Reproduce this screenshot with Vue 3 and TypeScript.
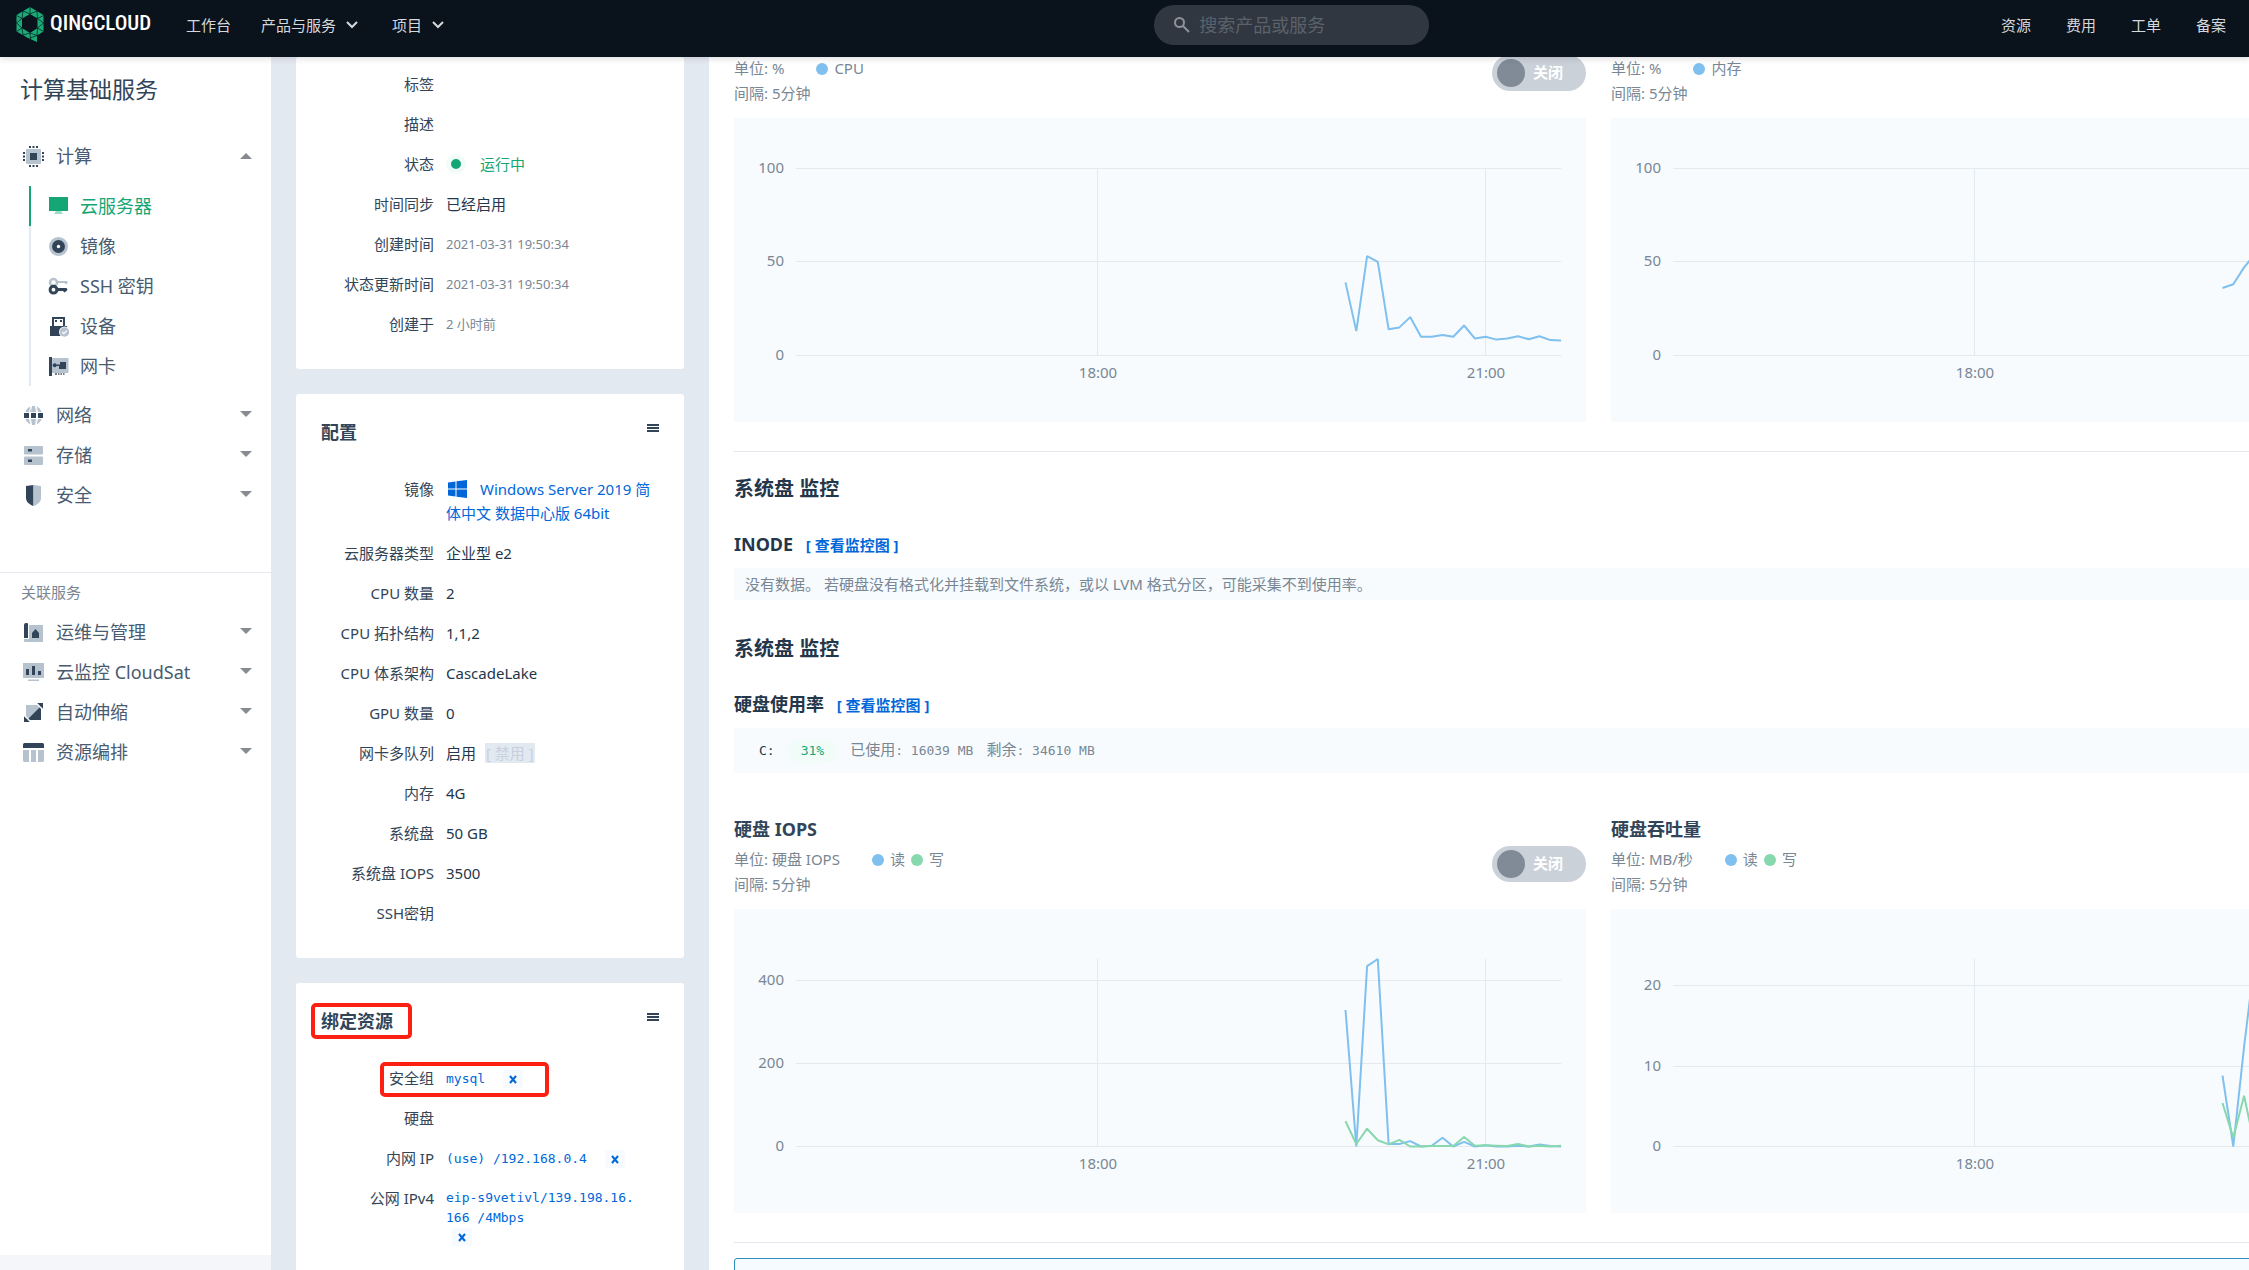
<script setup lang="ts">
interface NavItem { label: string; icon: string; active?: boolean }
interface Series { color: string; values: number[] }
interface Chart {
  title?: string
  unit: string
  legend: { name: string; color: string }[]
  max: number
  yTicks: number[]
  xTicks: { label: string; x: number }[]
  series: Series[]
  toggle: boolean
}

const BLUE = '#7fc0ee'
const GREEN = '#87d8ac'

const D = '#324558'
const L = '#b6c2ce'

const icons: Record<string, string> = {
  cpu: `<path fill="${D}" d="M6 0h2v2H6zM9.500 0h2v2h-2zM13 0h2v2h-2zM6 19h2v2H6zM9.500 19h2v2h-2zM13 19h2v2h-2zM0 6h2v2H0zM0 9.500h2v2H0zM0 13h2v2H0zM19 6h2v2h-2zM19 9.500h2v2h-2zM19 13h2v2h-2z"/><path fill="${L}" d="M4 3h13a1 1 0 0 1 1 1v13a1 1 0 0 1-1 1H4a1 1 0 0 1-1-1V4a1 1 0 0 1 1-1z"/><path fill="${D}" d="M7 7h7v7H7z"/>`,
  server: `<path fill="#15a675" d="M1 1h19v14H1z"/><path fill="#a1dcc8" d="M8 15h5l2 3H6z"/>`,
  disc: `<circle cx="10.500" cy="10.500" r="9.500" fill="${L}"/><circle cx="10.500" cy="10.500" r="6.500" fill="${D}"/><circle cx="10.500" cy="10.500" r="1.700" fill="#fff"/>`,
  key: `<circle cx="5.500" cy="6.500" r="3.500" fill="none" stroke="${L}" stroke-width="2.400"/><path fill="${L}" d="M9 5h10.500v2L18 8.500 16.500 7H9z"/><circle cx="5.500" cy="13.700" r="3.400" fill="#fff" stroke="${D}" stroke-width="3"/><path fill="${D}" d="M9 12h9.500l1 1.500-1 1.500-2 1.500-1.500-1.500H9z"/>`,
  usb: `<path fill="${D}" d="M4 1h13v9h2v10H2V10h2z"/><path fill="#fff" d="M6 3h9v7H6z"/><path fill="${D}" d="M7 4h2v2H7zM12 4h2v2h-2z"/><circle cx="16.500" cy="16" r="5.500" fill="#fff"/><circle cx="16.500" cy="16" r="4.700" fill="${L}"/><path fill="none" stroke="#fff" stroke-width="1.300" d="M14.300 16l1.600 1.600 2.900-3"/>`,
  nic: `<path fill="${D}" d="M1 1h3v19H1z"/><path fill="${L}" d="M4 2h15.500a1 1 0 0 1 1 1v13a1 1 0 0 1-1 1H4z"/><path fill="${D}" d="M12 6h6v7h-7v-3H8.500a2 2 0 1 1 0-1.500H12z"/><path fill="${D}" opacity=".7" d="M7 17h2v2H7zM10 17h1.500v2H10zM12.500 17H14v2h-1.500zM15 17h1.500v2H15z"/>`,
  globe: `<path fill="${L}" d="M8 1.300V7H2.500C3.500 4.200 5.500 2.100 8 1.300zM9 1h3l1 6H8zM13 1.300c2.500.8 4.500 2.900 5.500 5.700H14zM2.500 14H7l1 5.700C5.500 18.900 3.500 16.800 2.500 14zM8 14h5l-1 6H9zM14 14h4.500c-1 2.800-3 4.900-5.500 5.700z"/><path stroke="#fff" stroke-width="1" d="M7.800 1L6.500 7M13.200 1l1.300 6M7.800 20l-1.300-6M13.200 20l1.300-6"/><path fill="${D}" d="M1 8h5v5H1zM8 8h5v5H8zM15 8h5v5h-5z"/>`,
  storage: `<rect x="1" y="1" width="19" height="8.500" rx="1" fill="${L}"/><rect x="1" y="11.500" width="19" height="8.500" rx="1" fill="${L}"/><path fill="${D}" d="M5 4h4v2.500H5zM5 14.500h4V17H5z"/>`,
  shield: `<path fill="${D}" d="M10.500 0L3 1v12c0 4 3.500 6.500 7.500 8z"/><path fill="${L}" d="M10.500 0L18 1v12c0 4-3.500 6.500-7.500 8z"/>`,
  ops: `<path fill="${L}" d="M6 3h14v17H2a1 1 0 0 1-1-1v-2h5z"/><path fill="${D}" d="M3 1h1a1 1 0 0 1 1 1v14H1V3a2 2 0 0 1 2-2zM9 16v-5l3.500-4 3.500 4v5z"/>`,
  stats: `<path fill="${L}" d="M0 1h21v15H0zM5 17.500h11V19H5z"/><path fill="${D}" d="M3 7h3v6H3zM9 4h3v9H9zM15 9h3v4h-3z"/>`,
  scale: `<path fill="${L}" d="M3 3h15v15H3z"/><path fill="${D}" d="M18 4v14H4zM14 1h6v6l-2-2zM1 14l6 6H1z"/><path stroke="#fff" stroke-width="1.200" d="M13 1l7 7M1 13l7 7"/>`,
  stack: `<path fill="${D}" d="M1.500 1h18A1.500 1.500 0 0 1 21 2.500V6H0V2.500A1.500 1.500 0 0 1 1.500 1z"/><path fill="${L}" d="M0 8h6v12H1.500A1.500 1.500 0 0 1 0 18.500zM8 8h5v12H8zM15 8h6v10.500a1.500 1.500 0 0 1-1.500 1.500H15z"/>`,
}

const computeItems: NavItem[] = [
  { label: '云服务器', icon: 'server', active: true },
  { label: '镜像', icon: 'disc' },
  { label: 'SSH 密钥', icon: 'key' },
  { label: '设备', icon: 'usb' },
  { label: '网卡', icon: 'nic' },
]
const groups: NavItem[] = [
  { label: '网络', icon: 'globe' },
  { label: '存储', icon: 'storage' },
  { label: '安全', icon: 'shield' },
]
const related: NavItem[] = [
  { label: '运维与管理', icon: 'ops' },
  { label: '云监控 CloudSat', icon: 'stats' },
  { label: '自动伸缩', icon: 'scale' },
  { label: '资源编排', icon: 'stack' },
]

const config = [
  { label: '云服务器类型', value: '企业型 e2' },
  { label: 'CPU 数量', value: '2' },
  { label: 'CPU 拓扑结构', value: '1,1,2' },
  { label: 'CPU 体系架构', value: 'CascadeLake' },
  { label: 'GPU 数量', value: '0' },
  { label: '网卡多队列', value: '启用', action: '[ 禁用 ]' },
  { label: '内存', value: '4G' },
  { label: '系统盘', value: '50 GB' },
  { label: '系统盘 IOPS', value: '3500' },
  { label: 'SSH密钥', value: '' },
]

const bound = [
  { label: '安全组', lines: ['mysql'] },
  { label: '硬盘', lines: [] as string[] },
  { label: '内网 IP', lines: ['(use) /192.168.0.4'] },
  { label: '公网 IPv4', lines: ['eip-s9vetivl/139.198.16.', '166 /4Mbps'] },
]

const t18 = { label: '18:00', x: 364 }
const t21 = { label: '21:00', x: 752 }
const rw = [{ name: '读', color: BLUE }, { name: '写', color: GREEN }]

const usage: Chart[] = [
  {
    unit: '%', legend: [{ name: 'CPU', color: BLUE }], max: 100, yTicks: [100, 50, 0], xTicks: [t18, t21], toggle: true,
    series: [{ color: BLUE, values: [39, 13, 53, 50, 14, 15, 20.5, 10, 10, 11, 10, 16, 9, 10, 8.5, 9, 10.3, 8.7, 10.3, 8.2, 8] }],
  },
  {
    unit: '%', legend: [{ name: '内存', color: BLUE }], max: 100, yTicks: [100, 50, 0], xTicks: [t18], toggle: false,
    series: [{ color: BLUE, values: [36, 38, 47, 54] }],
  },
]
const disk: Chart[] = [
  {
    title: '硬盘 IOPS', unit: '硬盘 IOPS', legend: rw, max: 452, yTicks: [400, 200, 0], xTicks: [t18, t21], toggle: true,
    series: [
      { color: BLUE, values: [329, 0, 435, 452, 6, 6, 13, 0, 2, 21, 0, 11, 0, 3, 0, 0, 2, 0, 5, 1, 0] },
      { color: GREEN, values: [61, 6, 43, 15, 5, 16, 0, 0, 1, 1, 1, 23, 2, 3, 2, 1, 6, 0, 2, 0, 2] },
    ],
  },
  {
    title: '硬盘吞吐量', unit: 'MB/秒', legend: rw, max: 23.3, yTicks: [20, 10, 0], xTicks: [t18], toggle: false,
    series: [
      { color: BLUE, values: [8.8, 0, 12.4, 23.3] },
      { color: GREEN, values: [5.4, 1.1, 6.3, 0] },
    ],
  },
]
const chartRows = { usage, disk }

const BASE = 237.5
const PLOT = 187.5
const yOf = (v: number, max: number) => BASE - (v / max) * PLOT
const lineY = (v: number, max: number) => Math.floor(yOf(v, max)) + 0.5
const points = (s: Series, max: number) =>
  s.values.map((v, i) => `${(611.5 + i * 10.78).toFixed(1)},${yOf(v, max).toFixed(1)}`).join(' ')
</script>

<template>
  <div class="app">
    <header class="topbar">
      <a class="logo" href="#">
        <svg width="28" height="36" viewBox="0 0 28 36" aria-hidden="true">
          <path fill="#1aab77" fill-rule="evenodd" d="M14 0l13.500 8v16.500L21 28.500V35l-9-4L.500 24.500V8zM14 7L6 11.500v9.500l8 5 7.500-5v-9.500z" />
          <path fill="none" stroke="#0a121b" stroke-width=".7" d="M7 4l-1 7.500-5.500-3M14 0v7L7 4M14 7l7-3 .5 7.500 6-3M6 11.500L.500 16 6 21l-5.500 3.500M21.500 11.500L27.500 16l-6 5 6 3.500M6 21l1 7 7-2 .5 6.500M21.500 21l-.5 7.500-7-2.500M14 31l7-2.500" />
        </svg>
        <span class="brand">QINGCLOUD</span>
      </a>
      <nav class="nav">
        <a href="#">工作台</a>
        <a href="#">产品与服务<svg width="12" height="8" viewBox="0 0 12 8"><path d="M1 1l5 5 5-5" /></svg></a>
        <a href="#">项目<svg width="12" height="8" viewBox="0 0 12 8"><path d="M1 1l5 5 5-5" /></svg></a>
      </nav>
      <label class="search">
        <svg width="16" height="16" viewBox="0 0 16 16"><circle cx="5.500" cy="5.500" r="4.500" /><path d="M9 9l6 6" /></svg>
        <input type="text" placeholder="搜索产品或服务" aria-label="搜索产品或服务" />
      </label>
      <nav class="nav nav-right">
        <a href="#">资源</a><a href="#">费用</a><a href="#">工单</a><a href="#">备案</a>
      </nav>
    </header>

    <div class="body">
      <aside class="sidebar">
        <div class="side-main">
          <h1>计算基础服务</h1>
          <button class="row" type="button">
            <svg width="21" height="21" viewBox="0 0 21 21" v-html="icons.cpu" />
            <span>计算</span><i class="caret up" />
          </button>
          <ul class="sub">
            <li v-for="n in computeItems" :key="n.label" :class="{ active: n.active }">
              <a href="#"><svg width="21" height="21" viewBox="0 0 21 21" v-html="icons[n.icon]" />{{ n.label }}</a>
            </li>
          </ul>
          <button v-for="n in groups" :key="n.label" class="row" type="button">
            <svg width="21" height="21" viewBox="0 0 21 21" v-html="icons[n.icon]" />
            <span>{{ n.label }}</span><i class="caret" />
          </button>
          <div class="related">
            <h2>关联服务</h2>
            <button v-for="n in related" :key="n.label" class="row" type="button">
              <svg width="21" height="21" viewBox="0 0 21 21" v-html="icons[n.icon]" />
              <span>{{ n.label }}</span><i class="caret" />
            </button>
          </div>
        </div>
        <div class="side-foot" />
      </aside>

      <section class="details">
        <article class="card card-basic">
          <dl>
            <div><dt>标签</dt><dd /></div>
            <div><dt>描述</dt><dd /></div>
            <div><dt>状态</dt><dd class="running"><i class="status" />运行中</dd></div>
            <div><dt>时间同步</dt><dd>已经启用</dd></div>
            <div><dt>创建时间</dt><dd class="muted">2021-03-31 19:50:34</dd></div>
            <div><dt>状态更新时间</dt><dd class="muted">2021-03-31 19:50:34</dd></div>
            <div><dt>创建于</dt><dd class="muted">2 小时前</dd></div>
          </dl>
        </article>

        <article class="card">
          <header class="card-head">
            <h2>配置</h2>
            <button class="menu" type="button" aria-label="菜单"><i /><i /><i /></button>
          </header>
          <dl>
            <div>
              <dt>镜像</dt>
              <dd>
                <a href="#"><svg class="win" width="19" height="18" viewBox="0 0 19 18"><path d="M0 2.500L7.500 1.400V8.500H0zM8.500 1.200L19 0v8.500H8.500zM0 9.500h7.500v7.100L0 15.500zM8.500 9.500H19V18L8.500 16.800z" /></svg>Windows Server 2019 简体中文 数据中心版 64bit</a>
              </dd>
            </div>
            <div v-for="c in config" :key="c.label">
              <dt>{{ c.label }}</dt>
              <dd>{{ c.value }}<button v-if="c.action" class="disabled" type="button" disabled>{{ c.action }}</button></dd>
            </div>
          </dl>
        </article>

        <article class="card">
          <header class="card-head">
            <h2>绑定资源</h2>
            <button class="menu" type="button" aria-label="菜单"><i /><i /><i /></button>
          </header>
          <dl>
            <div v-for="b in bound" :key="b.label">
              <dt>{{ b.label }}</dt>
              <dd class="bound">
                <template v-if="b.lines.length">
                  <a href="#"><span v-for="l in b.lines" :key="l">{{ l }}</span></a>
                  <button class="unbind" type="button" aria-label="解绑"><svg width="8" height="9" viewBox="0 0 8 9"><path d="M1 1l6 7M7 1L1 8" /></svg></button>
                </template>
              </dd>
            </div>
          </dl>
          <div class="mark mark-title" />
          <div class="mark mark-group" />
        </article>
      </section>

      <main class="monitor">
        <template v-for="(row, key) in chartRows" :key="key">
          <template v-if="key === 'disk'">
            <hr />
            <h2>系统盘 监控</h2>
            <h3>INODE <a href="#">[ 查看监控图 ]</a></h3>
            <p class="notice">没有数据。 若硬盘没有格式化并挂载到文件系统，或以 LVM 格式分区，可能采集不到使用率。</p>
            <h2 class="second">系统盘 监控</h2>
            <h3>硬盘使用率 <a href="#">[ 查看监控图 ]</a></h3>
            <div class="volume">
              <b>C:</b><span class="pill">31%</span>
              <span><em>已使用</em>: 16039 MB</span><span><em>剩余</em>: 34610 MB</span>
            </div>
          </template>
          <div class="charts" :class="`charts-${key}`">
            <figure v-for="(c, i) in row" :key="i">
              <h3 v-if="c.title">{{ c.title }}</h3>
              <div class="meta">
                <div>
                  <div class="unit">
                    <span class="unit-name">单位: {{ c.unit }}</span>
                    <span v-for="g in c.legend" :key="g.name" class="legend"><i :style="{ background: g.color }" />{{ g.name }}</span>
                  </div>
                  <div>间隔: 5分钟</div>
                </div>
                <label v-if="c.toggle" class="switch"><input type="checkbox" /><i /><span>关闭</span></label>
              </div>
              <svg class="plot" width="852" height="304" viewBox="0 0 852 304">
                <g class="grid">
                  <line v-for="y in c.yTicks" :key="y" x1="62" x2="827" :y1="lineY(y, c.max)" :y2="lineY(y, c.max)" />
                  <line v-for="t in c.xTicks" :key="t.label" :x1="t.x - 0.5" :x2="t.x - 0.5" y1="50" y2="237" />
                </g>
                <text v-for="y in c.yTicks" :key="y" x="50" :y="lineY(y, c.max) + 4" text-anchor="end">{{ y }}</text>
                <text v-for="t in c.xTicks" :key="t.label" :x="t.x" y="260" text-anchor="middle">{{ t.label }}</text>
                <polyline v-for="(s, k) in c.series" :key="k" :points="points(s, c.max)" :stroke="s.color" />
              </svg>
            </figure>
          </div>
        </template>
        <hr />
        <div class="alert" />
      </main>
    </div>
  </div>
</template>

<style>
body {
  background: #e3e9f1;
}
</style>

<style scoped>
.app {
  height: 100vh;
  overflow: hidden;
  display: flex;
  flex-direction: column;
  font-family: "Noto Sans", "Noto Sans CJK SC", sans-serif;
  font-size: 15px;
  line-height: 24px;
  color: #24364a;
}
* { box-sizing: border-box; }
h1, h2, h3, p, ul, dl, dd, figure { margin: 0; padding: 0; }
a { color: #0067d9; text-decoration: none; }
button { font: inherit; border: 0; background: none; padding: 0; color: inherit; }

.topbar {
  position: relative;
  z-index: 2;
  flex: none;
  height: 57px;
  padding: 5px 23px 7px 16px;
  display: grid;
  grid-template-columns: 10fr 275px 7fr;
  grid-template-areas: "left search right";
  align-items: start;
  background: #0a121b;
  box-shadow: 0 2px 6px rgba(36, 30, 50, 0.14);
}
.logo {
  grid-area: left;
  position: relative;
  z-index: 1;
  display: flex;
  gap: 6px;
  padding-top: 2px;
  width: max-content;
}
.brand {
  color: #fff;
  font: 500 21px/32px "Roboto Condensed", "Liberation Sans Narrow", Roboto, sans-serif;
}
.nav {
  grid-area: left;
  display: flex;
  gap: 30px;
  padding-left: 170px;
  line-height: 40px;
  width: max-content;
}
.nav a { color: #d5d8db; }
.nav svg { margin: 0 4px 0 10px; vertical-align: 2px; fill: none; stroke: #d5d8db; stroke-width: 2; }
.nav-right { grid-area: right; justify-self: end; gap: 35px; padding: 0; }
.search {
  grid-area: search;
  display: flex;
  align-items: center;
  gap: 9px;
  height: 40px;
  padding: 0 20px 1px;
  border-radius: 20px;
  background: #303740;
}
.search svg { flex: none; fill: none; stroke: #8d9399; stroke-width: 2; }
.search input {
  flex: 1;
  min-width: 0;
  border: 0;
  padding: 0;
  outline: 0;
  background: none;
  color: #fff;
  font: inherit;
  font-size: 18px;
}
.search input::placeholder { color: #5b626b; opacity: 1; }

.body { flex: 1; min-height: 0; display: flex; }

.sidebar { flex: none; width: 271px; display: flex; flex-direction: column; background: #fff; }
.side-main { flex: 1; padding-top: 15px; }
.side-foot { height: 15px; background: #f4f6fa; }
.sidebar h1 { margin: 0 20px 30px; font-size: 23px; line-height: 34px; font-weight: 400; color: #324558; }
.row {
  display: flex;
  align-items: center;
  width: 100%;
  height: 40px;
  padding: 0 19px 0 23px;
  gap: 12px;
  font-size: 18px;
  color: #485b70;
  text-align: left;
}
.row span { flex: 1; }
.caret { margin-bottom: 3px; border: 6px solid transparent; border-top-color: #858b91; border-bottom: 0; }
.caret.up { margin-bottom: 0; border-top: 0; border-bottom: 6px solid #858b91; }
.sub { margin: 10px 0 9px 29px; list-style: none; }
.sub li { height: 40px; border-left: 2px solid #e3e9f1; }
.sub a { display: flex; align-items: center; gap: 11px; height: 40px; padding-left: 17px; font-size: 18px; color: #485b70; }
.sub .active { border-color: #15a675; }
.sub .active a { color: #15a675; }
.related { margin-top: 57px; padding-top: 9px; border-top: 1px solid #e3e9ef; }
.related h2 { margin: 0 21px 10px; font-size: 15px; line-height: 20px; font-weight: 400; color: #798794; }

.details { flex: none; width: 438px; padding: 0 25px; display: flex; flex-direction: column; gap: 25px; }
.card { position: relative; flex: none; padding: 24px 25px 25px 0; border-radius: 3px; background: #fff; }
.card-basic { padding-top: 7px; }
.card-head { display: flex; justify-content: space-between; align-items: flex-start; padding-left: 25px; margin-bottom: 23px; }
.card-head h2 { font-size: 18px; line-height: 28px; color: #324558; }
.menu { display: flex; flex-direction: column; justify-content: center; gap: 1px; width: 12px; height: 20px; }
.menu i { height: 2px; background: #324558; }
dl > div { display: flex; gap: 12px; padding: 8px 0; min-height: 40px; }
dt { flex: none; width: 138px; text-align: right; color: #324558; }
dd { flex: 1; min-width: 0; }
.muted { font-size: 13px; color: #798794; }
.running { display: flex; align-items: center; gap: 14px; color: #15a675; }
.status { width: 20px; height: 20px; border: 5px solid #f1fcf9; border-radius: 50%; background: #15a675; }
.win { margin: 0 13px 0 2px; vertical-align: -3px; fill: #0067d9; }
.disabled { margin-left: 9px; line-height: 20px; padding: 0 1px; background: #e3e9f1; color: #c5d1de; }
.bound { display: flex; flex-wrap: wrap; align-items: center; gap: 0 12px; padding-top: 2px; font: 13px/20px "DejaVu Sans Mono", monospace; }
.bound span { display: block; white-space: nowrap; }
.unbind { display: flex; align-items: center; justify-content: center; width: 20px; height: 18px; margin-left: 6px; border-radius: 2px; background: #f7fafe; }
.unbind svg { fill: none; stroke: #0067d9; stroke-width: 2; }
.mark { position: absolute; border: 4px solid #fb2011; border-radius: 5px; }
.mark-title { left: 15px; top: 20px; width: 101px; height: 36px; }
.mark-group { left: 84px; top: 79px; width: 169px; height: 35px; }

.monitor { flex: 1; min-width: 0; margin-top: -1px; padding-left: 25px; overflow: hidden; background: #fff; }
.monitor hr { height: 1px; margin: 29px 0 0; border: 0; background: #e3e8ee; }
.monitor h2 { margin-top: 22px; font-size: 20px; line-height: 30px; }
.monitor h2.second { margin-top: 34px; }
.monitor h3 { font-size: 18px; line-height: 28px; }
.monitor > h3 { margin: 26px 0 9px; }
.monitor h3 a { margin-left: 8px; font-size: 15px; }
.notice { height: 32px; padding-left: 11px; line-height: 32px; background: #f7fbfe; color: #798794; }
.volume {
  display: flex;
  align-items: center;
  height: 45px;
  padding-left: 25px;
  gap: 13px;
  background: #f7fbfe;
  color: #798794;
  font-family: "DejaVu Sans Mono", "Noto Sans CJK SC", monospace;
  font-size: 13px;
}
.volume b { font-weight: 400; color: #24364a; }
.volume em { font-size: 15px; font-style: normal; }
.pill { padding: 0 13px; border-radius: 12px; background: #f1fcf9; color: #15a675; }
.charts { display: grid; grid-template-columns: 852px 1fr; gap: 25px; }
.charts-disk { margin-top: 42px; }
.charts figure { min-width: 0; overflow: hidden; }
.charts h3 { margin-bottom: 4px; color: #324558; }
.meta { display: flex; justify-content: space-between; align-items: flex-start; height: 62px; line-height: 25px; color: #798794; }
.unit { display: flex; gap: 6px; }
.unit-name { margin-right: 26px; }
.legend { display: flex; align-items: center; gap: 6px; }
.legend i { width: 12px; height: 12px; border-radius: 50%; }
.switch { display: flex; align-items: center; gap: 8px; width: 94px; height: 36px; margin-top: -1px; padding: 0 0 1px 5px; border-radius: 18px; background: #cad1d8; color: #fff; font-weight: 700; }
.switch input { position: absolute; opacity: 0; }
.switch i { width: 28px; height: 28px; border-radius: 50%; background: #808b97; }
.plot { display: block; background: #f7fbfe; }
.plot line { stroke: #e4e9ee; }
.plot text { font-size: 15px; fill: #798794; }
.plot polyline { fill: none; stroke-width: 2; stroke-linejoin: bevel; }
.alert { height: 60px; margin: 15px -4px 0 0; border: 1px solid #2b90bb; border-radius: 3px; background: #f5fbfe; }
</style>
